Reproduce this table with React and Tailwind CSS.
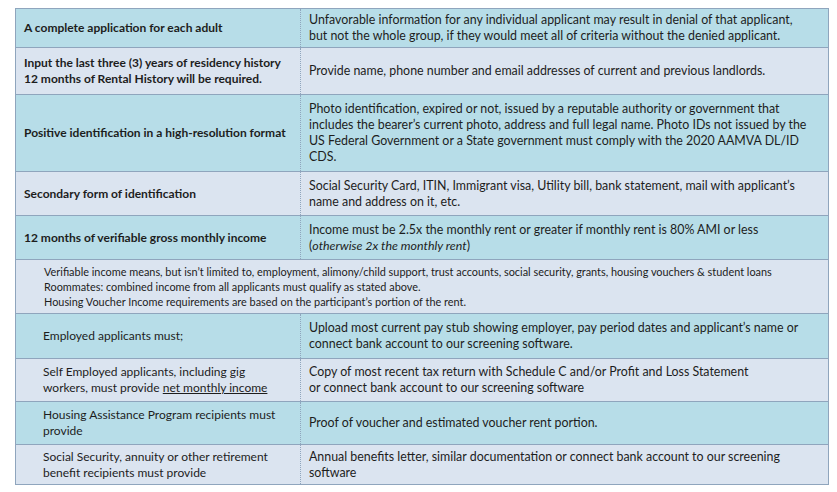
import React from "react";

const BLUE = "bg-[#b7dde8]";
const GREY = "bg-[#dbe4f0]";

const rows = [
  {
    h: "h-[38px]",
    bg: BLUE,
    left: <b>A complete application for each adult</b>,
    right: (
      <>
        Unfavorable information for any individual applicant may result in denial of that applicant,
        <br />
        but not the whole group, if they would meet all of criteria without the denied applicant.
      </>
    ),
  },
  {
    h: "h-[47px]",
    bg: GREY,
    left: (
      <b>
        Input the last three (3) years of residency history
        <br />
        12 months of Rental History will be required.
      </b>
    ),
    right: <>Provide name, phone number and email addresses of current and previous landlords.</>,
  },
  {
    h: "h-[77px]",
    bg: BLUE,
    left: <b>Positive identification in a high-resolution format</b>,
    right: (
      <>
        Photo identification, expired or not, issued by a reputable authority or government that
        <br />
        includes the bearer’s current photo, address and full legal name. Photo IDs not issued by the
        <br />
        US Federal Government or a State government must comply with the 2020 AAMVA DL/ID
        <br />
        CDS.
      </>
    ),
  },
  {
    h: "h-[44px]",
    bg: GREY,
    left: <b>Secondary form of identification</b>,
    right: (
      <>
        Social Security Card, ITIN, Immigrant visa, Utility bill, bank statement, mail with applicant’s
        <br />
        name and address on it, etc.
      </>
    ),
  },
  {
    h: "h-[44px]",
    bg: BLUE,
    left: <b>12 months of verifiable gross monthly income</b>,
    right: (
      <>
        Income must be 2.5x the monthly rent or greater if monthly rent is 80% AMI or less
        <br />(<i>otherwise 2x the monthly rent</i>)
      </>
    ),
  },
];

const subRows = [
  {
    h: "h-[45px]",
    bg: BLUE,
    left: <>Employed applicants must;</>,
    right: (
      <>
        Upload most current pay stub showing employer, pay period dates and applicant’s name or
        <br />
        connect bank account to our screening software.
      </>
    ),
  },
  {
    h: "h-[43px]",
    bg: GREY,
    left: (
      <>
        Self Employed applicants, including gig
        <br />
        workers, must provide <span className="underline">net monthly income</span>
      </>
    ),
    right: (
      <>
        Copy of most recent tax return with Schedule C and/or Profit and Loss Statement
        <br />
        or connect bank account to our screening software
      </>
    ),
  },
  {
    h: "h-[43px]",
    bg: BLUE,
    left: (
      <>
        Housing Assistance Program recipients must
        <br />
        provide
      </>
    ),
    right: <>Proof of voucher and estimated voucher rent portion.</>,
  },
  {
    h: "h-[40px]",
    bg: GREY,
    left: (
      <>
        Social Security, annuity or other retirement
        <br />
        benefit recipients must provide
      </>
    ),
    right: (
      <>
        Annual benefits letter, similar documentation or connect bank account to our screening
        <br />
        software
      </>
    ),
  },
];

function Row({ h, bg, left, right, indent, first }) {
  return (
    <div className={`flex ${h} ${bg} ${first ? "" : "border-t border-[#8fa5bd]"}`}>
      <div className={`w-[284px] shrink-0 flex items-center ${indent ? "pl-[27px]" : "pl-2"} pr-2 text-[12px]`}>
        <div>{left}</div>
      </div>
      <div className="flex-1 flex items-center px-2 border-l border-dotted border-[#8fa5bd] text-[12.4px]">
        <div>{right}</div>
      </div>
    </div>
  );
}

export default function App() {
  return (
    <div className="w-[837px] h-[492px] bg-white pt-[8px] pl-[15px]">
      <div
        className="w-[814px] border border-[#8fa5bd] leading-[16px] text-[#1d1d1d] whitespace-nowrap"
        style={{ fontFamily: "Lato, 'Noto Sans', sans-serif" }}
      >
        {rows.map((r, i) => (
          <Row key={i} {...r} first={i === 0} />
        ))}
        <div className={`h-[54px] ${GREY} border-t border-[#8fa5bd] flex items-center pl-[28px] text-[10.9px] leading-[15px]`}>
          <div>
            Verifiable income means, but isn’t limited to, employment, alimony/child support, trust accounts, social security, grants, housing vouchers &amp; student loans
            <br />
            Roommates: combined income from all applicants must qualify as stated above.
            <br />
            Housing Voucher Income requirements are based on the participant’s portion of the rent.
          </div>
        </div>
        {subRows.map((r, i) => (
          <Row key={i} {...r} indent />
        ))}
      </div>
    </div>
  );
}
